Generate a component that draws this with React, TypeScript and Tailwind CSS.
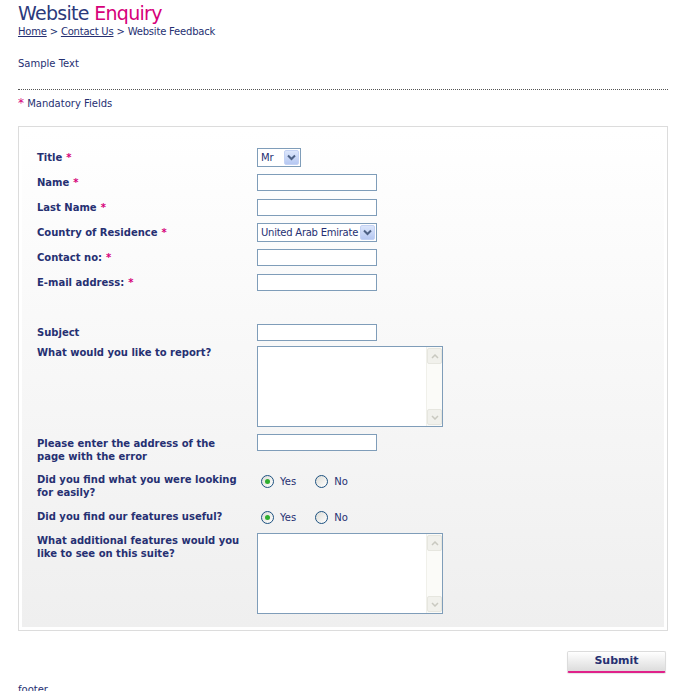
import React from "react";

const navy = "text-[#263072]";
const Star = () => <span className="text-[#d6007a] ml-[4px]">*</span>;

function TextBox() {
  return <div className="w-[120px] h-[17px] border border-[#7f9db9] bg-white" />;
}

function Sel({ w, text }: { w: string; text: string }) {
  return (
    <div className={`${w} h-[19px] border border-[#7f9db9] bg-white flex items-center justify-between pl-[3px] pr-[1px]`}>
      <span className="text-[10px] tracking-[-0.25px] text-[#263072] whitespace-nowrap">{text}</span>
      <div className="w-[15px] h-[15px] shrink-0 bg-gradient-to-b from-[#dce6fb] to-[#b6c8f2] border border-[#c4d2f4] flex items-center justify-center rounded-[2px]">
        <svg width="9" height="7" viewBox="0 0 9 7"><path d="M1 1.5 L4.5 5 L8 1.5" stroke="#4d6185" strokeWidth="2" fill="none" /></svg>
      </div>
    </div>
  );
}

function TextArea() {
  return (
    <div className="w-[186px] h-[81px] border border-[#7f9db9] bg-white flex justify-end">
      <div className="w-[16px] h-full bg-[#fbfbf8] border-l border-[#f0f0ea] flex flex-col justify-between py-[1px] pr-[1px]">
        <div className="w-[15px] h-[16px] bg-[#f1f1ec] border border-[#e6e6df] rounded-[2px] flex items-center justify-center">
          <svg width="8" height="5" viewBox="0 0 8 5"><path d="M1 4 L4 1 L7 4" stroke="#c9c9c0" strokeWidth="1.5" fill="none" /></svg>
        </div>
        <div className="w-[15px] h-[16px] bg-[#f1f1ec] border border-[#e6e6df] rounded-[2px] flex items-center justify-center">
          <svg width="8" height="5" viewBox="0 0 8 5"><path d="M1 1 L4 4 L7 1" stroke="#c9c9c0" strokeWidth="1.5" fill="none" /></svg>
        </div>
      </div>
    </div>
  );
}

function Radio({ on }: { on?: boolean }) {
  return (
    <div className="w-[13px] h-[13px] rounded-full border border-[#1c5180] bg-gradient-to-br from-[#dcdcd6] to-white flex items-center justify-center">
      {on && <div className="w-[5px] h-[5px] rounded-full bg-[#2fae2f]" />}
    </div>
  );
}

function Radios() {
  return (
    <div className="flex items-center text-[10px] text-[#263072]">
      <div className="ml-[4px]"><Radio on /></div>
      <span className="ml-[6px]">Yes</span>
      <div className="ml-[19px]"><Radio /></div>
      <span className="ml-[6px]">No</span>
    </div>
  );
}

function Row({ label, children, h = "h-[25px]" }: { label: React.ReactNode; children: React.ReactNode; h?: string }) {
  return (
    <div className={`flex items-center ${h}`}>
      <div className={`w-[220px] shrink-0 font-bold text-[10px] leading-[13px] ${navy}`}>{label}</div>
      <div>{children}</div>
    </div>
  );
}

export default function App() {
  return (
    <div className="bg-white w-[679px] h-[691px] overflow-hidden text-[#263072]" style={{ fontFamily: '"DejaVu Sans", Verdana, sans-serif' }}>
      <div className="pl-[18px] pr-[11px] pt-[1px]">
        <h1 className="text-[19px] leading-[24px] tracking-[-0.7px]">
          <span className="text-[#2c3a7c]">Website</span> <span className="text-[#d6007a]">Enquiry</span>
        </h1>
        <div className="text-[10px] leading-[13px] tracking-[-0.2px]">
          <span className="underline">Home</span> &gt; <span className="underline">Contact Us</span> &gt; Website Feedback
        </div>
        <div className="text-[10px] leading-[13px] mt-[19px]">Sample Text</div>
        <div className="mt-[19px] border-t border-dotted border-[#555]" />
        <div className="text-[10px] leading-[13px] mt-[7px]">
          <span className="text-[#d6007a] text-[12px]">*</span> Mandatory Fields
        </div>

        <div className="mt-[16px] border border-[#dcdcdc] p-[3px] h-[505px]">
          <div className="h-full bg-gradient-to-b from-white to-[#efefef] pl-[15px] pt-[15px]">
            <Row label={<>Title<Star /></>}><Sel w="w-[44px]" text="Mr" /></Row>
            <Row label={<>Name<Star /></>}><TextBox /></Row>
            <Row label={<>Last Name<Star /></>}><TextBox /></Row>
            <Row label={<>Country of Residence<Star /></>}><Sel w="w-[120px]" text="United Arab Emirate" /></Row>
            <Row label={<>Contact no:<Star /></>}><TextBox /></Row>
            <Row label={<>E-mail address:<Star /></>}><TextBox /></Row>
            <div className="h-[27px]" />
            <Row label="Subject" h="h-[20px]"><TextBox /></Row>
            <div className="flex mt-[4px] h-[87px]">
              <div className={`w-[220px] shrink-0 font-bold text-[10px] leading-[13px] ${navy}`}>What would you like to report?</div>
              <TextArea />
            </div>
            <div className="flex h-[36px] mt-[4px]">
              <div className={`w-[220px] shrink-0 font-bold text-[10px] leading-[13px] ${navy}`}>Please enter the address of the<br />page with the error</div>
              <div className="-mt-[3px]"><TextBox /></div>
            </div>
            <div className="flex h-[37px]">
              <div className={`w-[220px] shrink-0 font-bold text-[10px] leading-[13px] ${navy}`}>Did you find what you were looking<br />for easily?</div>
              <div className="mt-[1px]"><Radios /></div>
            </div>
            <div className="flex h-[24px]">
              <div className={`w-[220px] shrink-0 font-bold text-[10px] leading-[13px] ${navy}`}>Did you find our features useful?</div>
              <div><Radios /></div>
            </div>
            <div className="flex">
              <div className={`w-[220px] shrink-0 font-bold text-[10px] leading-[13px] ${navy}`}>What additional features would you<br />like to see on this suite?</div>
              <div className="-mt-[1px]"><TextArea /></div>
            </div>
          </div>
        </div>

        <div className="flex justify-end mt-[20px] pr-[2px]">
          <button className="w-[99px] h-[22px] border border-[#dcdcdc] border-b-2 border-b-[#e0218a] bg-gradient-to-b from-white to-[#dcdcdc] font-bold text-[11px] text-[#263072] rounded-[2px] shadow-[0_1px_1px_rgba(0,0,0,0.1)]">
            Submit
          </button>
        </div>
        <div className="text-[10px] leading-[13px] mt-[10px]">footer</div>
      </div>
    </div>
  );
}
